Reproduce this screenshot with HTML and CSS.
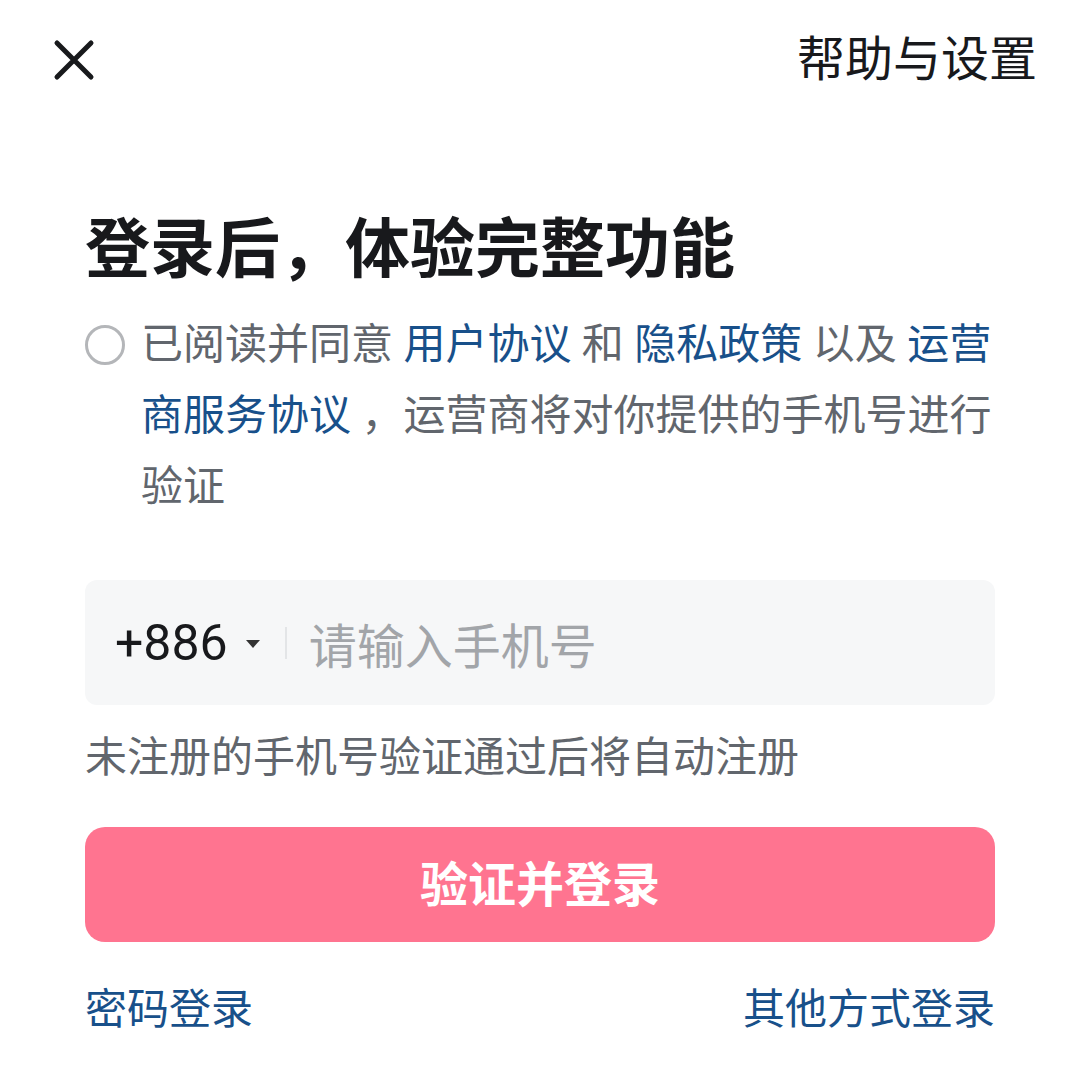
FILE: index.html
```html
<!DOCTYPE html>
<html lang="zh-CN">
<head>
    <meta charset="UTF-8">
    <title>登录</title>
    <link rel="stylesheet" href="styles.css">
</head>
<body>
    <div class="header">
        <a href="javascript:" class="close">
            <svg width="48" height="48" viewBox="0 0 48 48">
                <path d="M7 7 L41 41 M41 7 L7 41" stroke="#18191c" stroke-width="5" stroke-linecap="round" fill="none"/>
            </svg>
        </a>
        <a href="javascript:" class="help">帮助与设置</a>
    </div>

    <div class="main">
        <h1 class="title">登录后，体验完整功能</h1>

        <div class="agree">
            <span class="radio"></span>
            <p class="agree-text">已阅读并同意 <a href="javascript:">用户协议</a> 和 <a href="javascript:">隐私政策</a> 以及 <a href="javascript:">运营商服务协议</a> ，运营商将对你提供的手机号进行验证</p>
        </div>

        <div class="phone">
            <span class="code">+886</span>
            <span class="arrow"></span>
            <span class="line"></span>
            <span class="placeholder">请输入手机号</span>
        </div>

        <p class="tip">未注册的手机号验证通过后将自动注册</p>

        <a href="javascript:" class="submit">验证并登录</a>

        <div class="links">
            <a href="javascript:">密码登录</a>
            <a href="javascript:">其他方式登录</a>
        </div>
    </div>
</body>
</html>
```

FILE: styles.css
```css
*{
    margin:0;
    padding:0;
    text-decoration:none;
    box-sizing:border-box;
}

body{
    background:#fff;
    font-family:Roboto, "Noto Sans CJK SC", sans-serif;
    color:#18191c;
}

.header{
    height:120px;
    padding:0 42px 0 50px;
    display:flex;
    align-items:center;
    justify-content:space-between;
}

.close{
    display:block;
    width:48px;
    height:48px;
}

.close svg{
    display:block;
}

.help{
    font-size:48px;
    line-height:60px;
    color:#18191c;
}

.main{
    padding:0 84px 0 85px;
}

.title{
    margin-top:91px;
    font-size:65px;
    line-height:78px;
    font-weight:bold;
    color:#18191c;
}

.agree{
    margin-top:20px;
    display:flex;
    align-items:flex-start;
}

.radio{
    flex:none;
    width:40px;
    height:40px;
    margin-top:16px;
    margin-right:16px;
    border:3px solid #b4b6b9;
    border-radius:50%;
}

.agree-text{
    font-size:42px;
    line-height:71px;
    color:#61666d;
}

.agree-text a{
    color:#18508a;
}

/* 手机号输入框 */
.phone{
    margin-top:58px;
    height:125px;
    background:#f6f7f8;
    border-radius:12px;
    padding-left:30px;
    display:flex;
    align-items:center;
}

.code{
    font-size:50px;
    color:#18191c;
}

.arrow{
    width:0;
    height:0;
    margin-left:18px;
    margin-top:2px;
    border-left:7px solid transparent;
    border-right:7px solid transparent;
    border-top:8px solid #333;
}

.line{
    width:2px;
    height:32px;
    margin-left:25px;
    background:#e3e5e7;
}

.placeholder{
    margin-left:22px;
    font-size:48px;
    color:#a2a5a9;
}

.tip{
    margin-top:23px;
    font-size:42px;
    line-height:60px;
    color:#61666d;
}

.submit{
    display:block;
    margin-top:39px;
    height:115px;
    line-height:118px;
    border-radius:20px;
    background:#ff7490;
    color:#fff;
    font-size:48px;
    font-weight:bold;
    text-align:center;
}

.links{
    margin-top:38px;
    display:flex;
    justify-content:space-between;
    font-size:42px;
    line-height:60px;
}

.links a{
    color:#18508a;
}
```
